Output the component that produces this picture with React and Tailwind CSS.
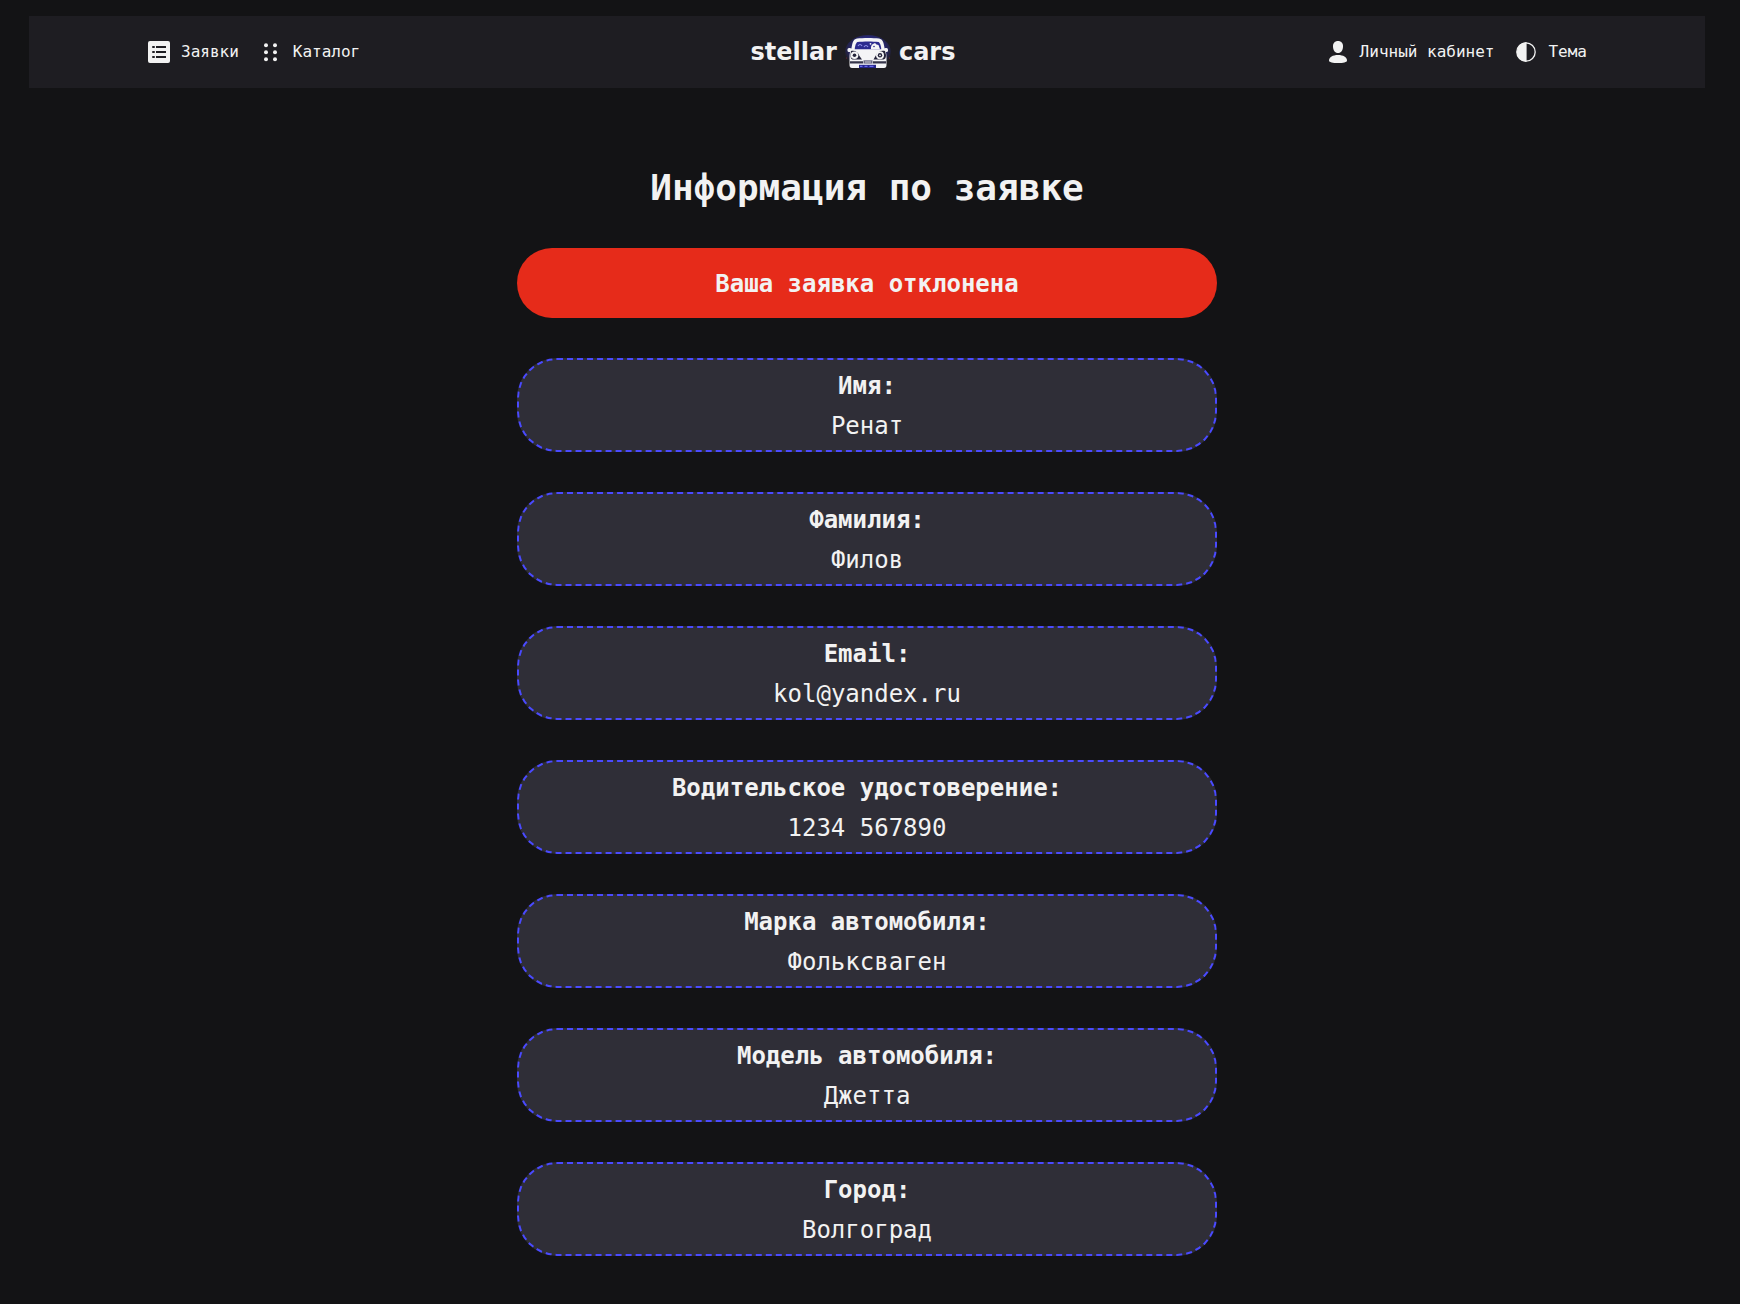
const fields = [
  { label: "Имя:", value: "Ренат" },
  { label: "Фамилия:", value: "Филов" },
  { label: "Email:", value: "kol@yandex.ru" },
  { label: "Водительское удостоверение:", value: "1234 567890" },
  { label: "Марка автомобиля:", value: "Фольксваген" },
  { label: "Модель автомобиля:", value: "Джетта" },
  { label: "Город:", value: "Волгоград" },
];

function ListIcon() {
  return (
    <svg viewBox="0 0 24 24" className="size-6 shrink-0" aria-hidden="true">
      <rect x="1" y="1" width="22" height="22" rx="2" fill="#f2f2f2" />
      <g fill="#1e1d22">
        <rect x="5" y="6" width="3" height="2" rx="1" />
        <rect x="5" y="11" width="3" height="2" rx="1" />
        <rect x="5" y="16" width="3" height="2" rx="1" />
        <rect x="9" y="6" width="10" height="2" />
        <rect x="9" y="11" width="10" height="2" />
        <rect x="9" y="16" width="10" height="2" />
      </g>
    </svg>
  );
}

function DotsIcon() {
  return (
    <svg viewBox="0 0 24 24" className="size-6 shrink-0" fill="#f2f2f2" aria-hidden="true">
      <circle cx="7" cy="5.2" r="2" />
      <circle cx="16" cy="5.2" r="2" />
      <circle cx="7" cy="12.2" r="2" />
      <circle cx="16" cy="12.2" r="2" />
      <circle cx="7" cy="19.2" r="2" />
      <circle cx="16" cy="19.2" r="2" />
    </svg>
  );
}

function UserIcon() {
  return (
    <svg viewBox="0 0 24 24" className="size-6 shrink-0" fill="#f2f2f2" aria-hidden="true">
      <path d="M12 1c3.2 0 5 2.1 5 5.2 0 4-2 6.8-5 6.8S7 10.200 7 6.200C7 3.100 8.800 1 12 1Z" />
      <path d="M12 15c5.200 0 9 2.200 9 5.400 0 1.800-3.800 2.600-9 2.600s-9-.8-9-2.600C3 17.200 6.800 15 12 15Z" />
    </svg>
  );
}

function ThemeIcon() {
  return (
    <svg viewBox="0 0 24 24" className="size-6 shrink-0" aria-hidden="true">
      <circle cx="12" cy="12" r="9.200" fill="none" stroke="#f2f2f2" strokeWidth="1.300" />
      <path d="M12.600 2.200V21.800A9.800 9.800 0 0 1 12.600 2.200Z" fill="#f2f2f2" />
    </svg>
  );
}

function CarLogo() {
  return (
    <svg viewBox="0 0 46 36" className="h-9 w-[46px] shrink-0" aria-hidden="true">
      <defs>
        <radialGradient id="glow" cx="50%" cy="42%" r="55%">
          <stop offset="0.6" stopColor="#2a2a8c" stopOpacity="0.95" />
          <stop offset="0.85" stopColor="#26265e" stopOpacity="0.6" />
          <stop offset="1" stopColor="#26264a" stopOpacity="0" />
        </radialGradient>
      </defs>
      <ellipse cx="23" cy="18" rx="23" ry="17" fill="url(#glow)" />
      <circle cx="1.500" cy="24" r="0.600" fill="#7a2438" />
      <circle cx="44.500" cy="24" r="0.600" fill="#7a2438" />
      {/* mirrors */}
      <rect x="2.500" y="14" width="4" height="4" rx="1.500" fill="#f4f4f6" />
      <rect x="39" y="14" width="4" height="4" rx="1.500" fill="#f4f4f6" />
      {/* body */}
      <path
        d="M12 4.500C18 3.700 28 3.700 34 4.500C38 5.300 38.500 8.500 39.500 14C41 16.500 41.500 20 41.500 24V31Q41.500 34 39 34H7Q4.500 34 4.500 31V24C4.500 20 5 16.500 6.500 14C7.500 8.500 8 5.300 12 4.500Z"
        fill="#f4f4f6"
      />
      {/* windshield and passengers */}
      <path d="M12.500 8C18 7.300 28 7.300 33.500 8C35 8.500 36 12 36.300 15.300H9.700C10 12 11 8.500 12.500 8Z" fill="#2c2b8f" />
      <path d="M13 12q2-3 4 0M19 13q2-3 4 0" stroke="#8f8fe8" strokeWidth="1.200" fill="none" />
      <path d="M26 15.300q-.5-4 2-5.300l2-1 1.500 1.500 2 .5 1.500 4.300Z" fill="#f4f4f6" />
      <circle cx="25.500" cy="9.800" r="0.900" fill="#f4f4f6" />
      <circle cx="29" cy="12.500" r="0.800" fill="#2c2b8f" />
      {/* fenders */}
      <path d="M6 17C10 16 13 18 14.500 22L17 25.500H7.500Q5.500 25 5.500 21Z" fill="#24233a" />
      <path d="M40 17C36 16 32 18 30.500 22L28.500 25.500H38.500Q41 25 41 21Z" fill="#24233a" />
      <circle cx="9.500" cy="21.300" r="3.800" fill="#f4f4f6" />
      <circle cx="9.500" cy="21.300" r="1.800" fill="#24233a" />
      <circle cx="35" cy="21.300" r="4" fill="#f4f4f6" />
      <circle cx="35" cy="21.300" r="2.200" fill="#24233a" />
      <circle cx="35" cy="21.300" r="0.900" fill="#f4f4f6" />
      {/* bumper and plate */}
      <path d="M5 27.200H18V29.500H5ZM28 27.200H41V29.500H28Z" fill="#35344a" />
      <rect x="18.500" y="26.300" width="9" height="3.300" fill="#6a6982" />
      <path d="M20 28h6" stroke="#f4f4f6" strokeWidth="0.700" />
      <path d="M14 30.800H31V34H14Z" fill="#24248a" />
      <path d="M15 32.300h2.500m2 0h3m2 0h4" stroke="#6c6cf0" strokeWidth="1.300" />
    </svg>
  );
}

export default function App() {
  return (
    <div className="min-h-screen bg-[#131315] pt-4 pr-1.5 pb-12 font-['DejaVu_Sans_Mono',monospace] text-[#f2f2f2]">
      <header className="mx-[29px] bg-[#1e1d22]">
        <div className="mx-auto flex h-[72px] max-w-[1440px] items-center justify-between text-base">
          <nav className="flex items-center gap-5">
            <a href="#applications" className="flex items-center gap-2.5">
              <ListIcon />
              Заявки
            </a>
            <a href="#catalog" className="flex items-center gap-2.5">
              <DotsIcon />
              Каталог
            </a>
          </nav>
          <a
            href="#home"
            className="flex items-center gap-2 font-['DejaVu_Sans',sans-serif] text-2xl leading-6 font-bold"
          >
            <span className="w-[114px] text-right">stellar</span>
            <CarLogo />
            <span className="w-16">cars</span>
          </a>
          <div className="flex items-center gap-5">
            <a href="#profile" className="flex items-center gap-2.5">
              <UserIcon />
              Личный кабинет
            </a>
            <button type="button" className="flex cursor-pointer items-center gap-2.5">
              <ThemeIcon />
              Тема
            </button>
          </div>
        </div>
      </header>

      <main className="mx-auto mt-20 flex max-w-[700px] flex-col gap-10 text-center text-2xl leading-10">
        <h1 className="text-4xl leading-10 font-bold">Информация по заявке</h1>
        <p className="rounded-[40px] bg-[#e62b1a] pt-4 pb-3.5 font-bold">Ваша заявка отклонена</p>
        <dl className="flex flex-col gap-10">
          {fields.map((field) => (
            <div
              key={field.label}
              className="rounded-[40px] border-2 border-dashed border-[#4a4aff] bg-[#2f2e37] pt-1.5 pb-1"
            >
              <dt className="font-bold">{field.label}</dt>
              <dd className="font-light">{field.value}</dd>
            </div>
          ))}
        </dl>
      </main>
    </div>
  );
}
